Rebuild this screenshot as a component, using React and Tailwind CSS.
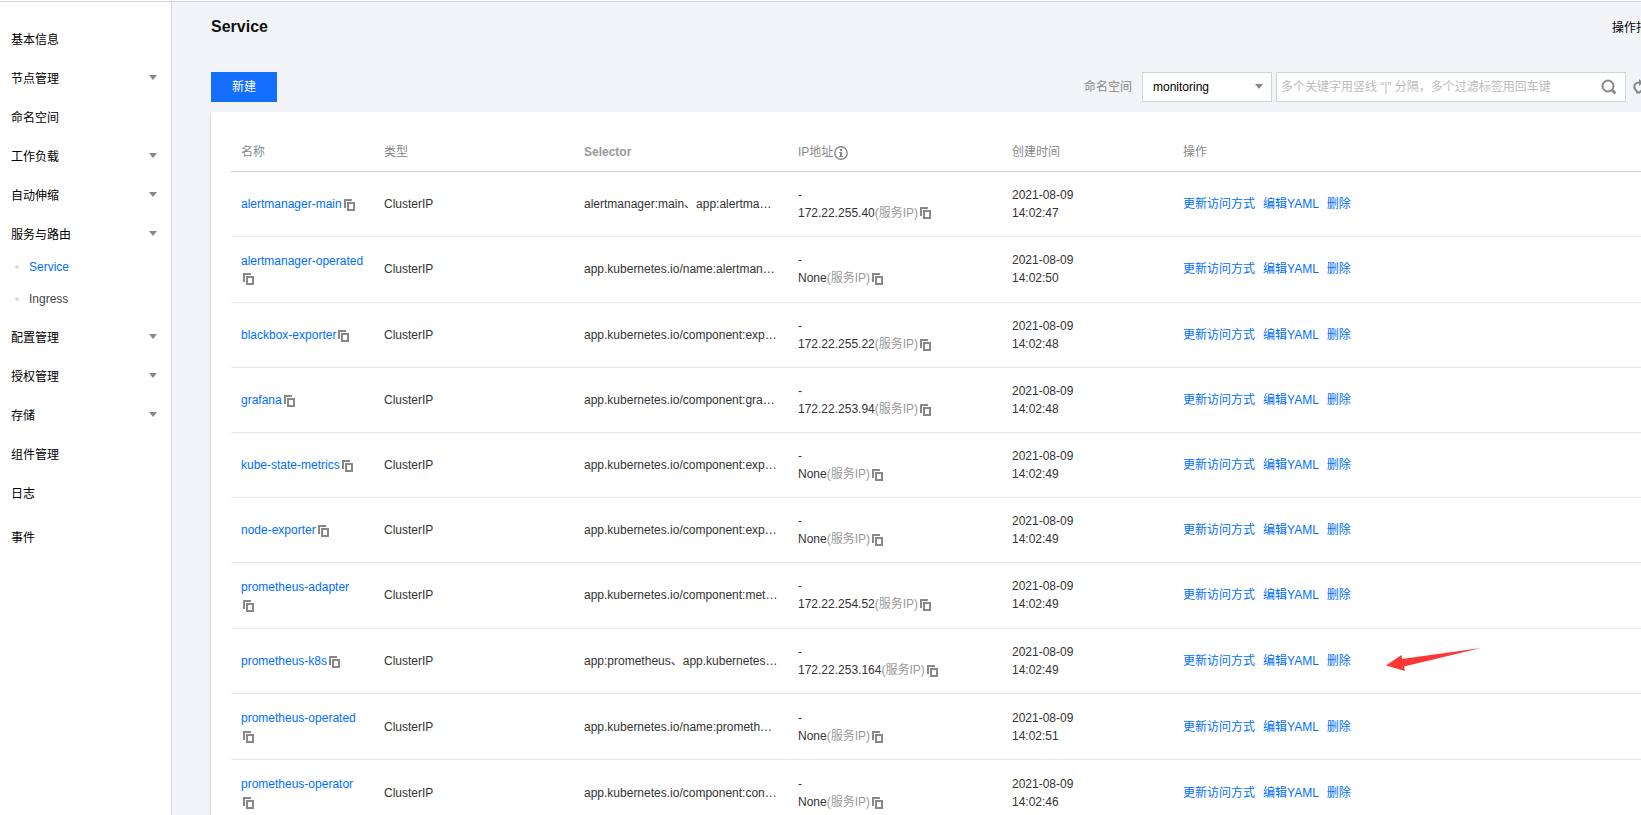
import { useState } from "react";

const menu = [
  { label: "基本信息" },
  { label: "节点管理", arrow: true },
  { label: "命名空间" },
  { label: "工作负载", arrow: true },
  { label: "自动伸缩", arrow: true },
  { label: "服务与路由", arrow: true, children: ["Service", "Ingress"] },
  { label: "配置管理", arrow: true },
  { label: "授权管理", arrow: true },
  { label: "存储", arrow: true },
  { label: "组件管理" },
  { label: "日志" },
];

const services = [
  { name: "alertmanager-main", selector: "alertmanager:main、app:alertma…", ip: "172.22.255.40", time: "14:02:47" },
  { name: "alertmanager-operated", selector: "app.kubernetes.io/name:alertman…", ip: "None", time: "14:02:50" },
  { name: "blackbox-exporter", selector: "app.kubernetes.io/component:exp…", ip: "172.22.255.22", time: "14:02:48" },
  { name: "grafana", selector: "app.kubernetes.io/component:gra…", ip: "172.22.253.94", time: "14:02:48" },
  { name: "kube-state-metrics", selector: "app.kubernetes.io/component:exp…", ip: "None", time: "14:02:49" },
  { name: "node-exporter", selector: "app.kubernetes.io/component:exp…", ip: "None", time: "14:02:49" },
  { name: "prometheus-adapter", selector: "app.kubernetes.io/component:met…", ip: "172.22.254.52", time: "14:02:49" },
  { name: "prometheus-k8s", selector: "app:prometheus、app.kubernetes…", ip: "172.22.253.164", time: "14:02:49", marked: true },
  { name: "prometheus-operated", selector: "app.kubernetes.io/name:prometh…", ip: "None", time: "14:02:51" },
  { name: "prometheus-operator", selector: "app.kubernetes.io/component:con…", ip: "None", time: "14:02:46" },
];

function Caret() {
  return (
    <svg width="8" height="5" viewBox="0 0 8 5" fill="#888" aria-hidden="true">
      <path d="M0 0h8L4 5z" />
    </svg>
  );
}

function CopyButton() {
  return (
    <button type="button" aria-label="复制" className="mr-1 ml-0.5 inline-block h-[19px] w-3 align-middle">
      <svg width="12" height="12" viewBox="0 0 12 12" fill="none" stroke="#888" strokeWidth="2" aria-hidden="true">
        <path d="M1 9V1h7" />
        <path d="M4 4h6v7H4z" />
      </svg>
    </button>
  );
}

function InfoIcon() {
  return (
    <svg className="ml-px inline-block align-middle" width="14" height="14" viewBox="0 0 14 14" fill="none" aria-hidden="true">
      <circle cx="7" cy="7" r="6.2" stroke="#888" strokeWidth="1.4" />
      <path d="M6 3h2v2H6zM5 6h3v4h1v1H5v-1h1V7H5z" fill="#888" />
    </svg>
  );
}

function Sidebar() {
  return (
    <nav className="w-43 shrink-0 border-r border-[#d8dadf] bg-white pt-4.5 text-black">
      <ul>
        {menu.map((item) => (
          <li key={item.label}>
            <a href="#" className="flex h-[39px] items-center justify-between pr-3.5 pl-[11px]">
              {item.label}
              {item.arrow && (
                <span className="pb-0.5">
                  <Caret />
                </span>
              )}
            </a>
            {item.children && (
              <ul className="-mt-[3px] pb-[3px]">
                {item.children.map((child) => (
                  <li key={child}>
                    <a
                      href="#"
                      className={
                        child === "Service"
                          ? "flex h-8 items-center gap-2.5 pl-[15px] text-[#006eff]"
                          : "flex h-8 items-center gap-2.5 pl-[15px] text-[#444]"
                      }
                    >
                      <span className="size-1 rounded-full bg-[#ddd]" />
                      {child}
                    </a>
                  </li>
                ))}
              </ul>
            )}
          </li>
        ))}
        <li className="pt-[5px]">
          <a href="#" className="flex h-[39px] items-center pl-[11px]">事件</a>
        </li>
      </ul>
    </nav>
  );
}

function Toolbar() {
  const [namespace, setNamespace] = useState("monitoring");

  return (
    <div className="flex items-center justify-between">
      <button type="button" className="h-[30px] bg-[#146fff] px-[21px] text-white">新建</button>
      <div className="flex items-center">
        <label htmlFor="namespace" className="mr-2.5 text-[#888]">命名空间</label>
        <div className="relative mr-1">
          <select
            id="namespace"
            value={namespace}
            onChange={(e) => setNamespace(e.target.value)}
            className="block h-[30px] w-[130px] appearance-none border border-[#cfd5de] bg-white pr-6 pl-2.5 text-black"
          >
            <option>monitoring</option>
            <option>default</option>
          </select>
          <span className="pointer-events-none absolute top-3 right-[9px]">
            <Caret />
          </span>
        </div>
        <div className="flex h-[30px] w-[350px] items-center border border-[#cfd5de] bg-white pr-2 pl-1">
          <input
            type="text"
            aria-label="搜索"
            placeholder="多个关键字用竖线 “|” 分隔，多个过滤标签用回车键"
            className="min-w-0 flex-1 outline-none placeholder:text-[#bbb]"
          />
          <button type="button" aria-label="搜索">
            <svg width="16" height="16" viewBox="0 0 16 16" fill="none" stroke="#888" strokeWidth="2" aria-hidden="true">
              <circle cx="7" cy="7" r="5.5" />
              <path d="M11 11l3.500 3.500" strokeWidth="2.500" />
            </svg>
          </button>
        </div>
        <button type="button" aria-label="刷新" className="mr-[31px] ml-[7px]">
          <svg width="16" height="16" viewBox="0 0 16 16" fill="none" stroke="#888" strokeWidth="2" aria-hidden="true">
            <path d="M4.500 12.500C0 10 0 4 6 3.500M11.500 3.500c4.500 2.500 4.500 8.500-1.500 9" />
            <path d="M6 0l4 3.500L6 7zM10 9v7l-4-3.500z" fill="#888" stroke="none" />
            <path d="M3 13.500h4" />
          </svg>
        </button>
      </div>
    </div>
  );
}

function ServiceRow({ service }) {
  return (
    <tr className="border-b border-[#e5e8ed]">
      <td className="px-2.5 pt-[15px] pb-[13px]">
        <a href="#" className="text-[#006eff]">{service.name}</a>
        <wbr />
        <CopyButton />
      </td>
      <td className="px-2.5">ClusterIP</td>
      <td className="px-2.5 whitespace-nowrap">{service.selector}</td>
      <td className="px-2.5 py-3.5">
        <p>-</p>
        <p className="h-[18px] whitespace-nowrap">
          {service.ip}
          <span className="text-[#999]">(服务IP)</span>
          <CopyButton />
        </p>
      </td>
      <td className="px-2.5">
        <p>2021-08-09</p>
        <p>{service.time}</p>
      </td>
      <td className="px-2.5">
        <div className="relative flex gap-2 text-[#006eff]">
          <a href="#">更新访问方式</a>
          <a href="#">编辑YAML</a>
          <a href="#">删除</a>
          {service.marked && (
            <svg className="absolute -top-1 left-[203px]" width="95" height="24" viewBox="0 0 95 24" fill="#fc3737" aria-hidden="true">
              <path d="M0 17.500L15.500 7l.5 4L95 0 18 18.500l1 4.500z" />
            </svg>
          )}
        </div>
      </td>
    </tr>
  );
}

export default function App() {
  return (
    <div className="h-screen overflow-hidden border-t border-white bg-[#f2f4f8] font-['Liberation_Sans','Noto_Sans_CJK_SC',sans-serif] text-xs leading-[18px] text-[#333]">
      <div className="-mr-[78px] flex min-h-full border-t border-[#cfd5de]">
        <Sidebar />
        <main className="min-w-0 flex-1 px-[39px]">
          <header className="flex h-[70px] justify-between pt-3.5">
            <h1 className="text-base font-bold leading-[22px] text-[#111]">Service</h1>
            <a href="#" className="mr-5 leading-6 text-black">操作指南</a>
          </header>
          <Toolbar />
          <section className="mt-2.5 bg-white px-5 pb-5 shadow-[0_2px_3px_rgba(0,0,0,0.2)]">
            <table className="w-full table-fixed text-left">
              <colgroup>
                <col className="w-[143px]" />
                <col className="w-[200px]" />
                <col className="w-[214px]" />
                <col className="w-[214px]" />
                <col className="w-[171px]" />
                <col />
              </colgroup>
              <thead>
                <tr className="h-[59px] border-b border-[#cfd5de] text-[#888]">
                  <th className="px-2.5 pt-[22px] font-normal">名称</th>
                  <th className="px-2.5 pt-[22px] font-normal">类型</th>
                  <th className="px-2.5 pt-[22px] font-bold text-[#999]">Selector</th>
                  <th className="px-2.5 pt-[22px] font-normal whitespace-nowrap">
                    IP地址
                    <InfoIcon />
                  </th>
                  <th className="px-2.5 pt-[22px] font-normal">创建时间</th>
                  <th className="px-2.5 pt-[22px] font-normal">操作</th>
                </tr>
              </thead>
              <tbody>
                {services.map((service) => (
                  <ServiceRow key={service.name} service={service} />
                ))}
              </tbody>
            </table>
          </section>
        </main>
      </div>
    </div>
  );
}
